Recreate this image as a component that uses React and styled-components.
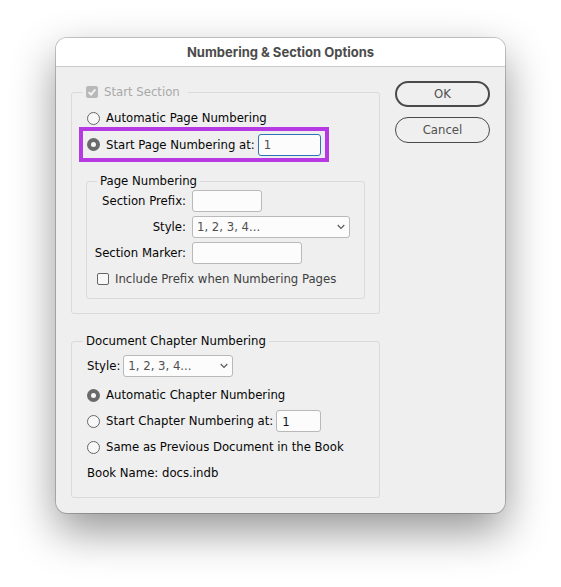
import React from "react";
import styled, { createGlobalStyle, css } from "styled-components";

const GlobalStyle = createGlobalStyle`
  *, *::before, *::after { box-sizing: border-box; }
  body {
    margin: 0;
    background: #fff;
    color: #060606;
    font: 13px/18px "DejaVu Sans Condensed", "Noto Sans", sans-serif;
  }
  button, input, select { font: inherit; margin: 0; }
`;

const Page = styled.main`
  display: flex;
  justify-content: center;
  align-items: flex-start;
  min-height: 100vh;
  padding: 38px 56px;
`;

const Dialog = styled.form`
  flex: 1;
  max-width: 640px;
  border-radius: 11px;
  background: #efefef;
  box-shadow: 0 0 0 1px rgba(0, 0, 0, 0.2), 0 18px 44px rgba(0, 0, 0, 0.42);
`;

const TitleBar = styled.header`
  display: flex;
  align-items: center;
  justify-content: center;
  height: 29px;
  border-bottom: 1px solid #cbcbcb;
  border-radius: 11px 11px 0 0;
  background: #fff;
`;

const Title = styled.h1`
  margin: 0;
  color: #4b4b4b;
  font: 700 13px/18px Inter, sans-serif;
`;

const Body = styled.div`
  display: flex;
  align-items: flex-start;
  gap: 15px;
  padding: 14px 15px 15px;
`;

const Sections = styled.div`
  display: grid;
  flex: 1;
  gap: 18px;
  min-width: 0;
`;

const Actions = styled.div`
  display: grid;
  flex: 0 0 95px;
  gap: 10px;
`;

const PillButton = styled.button`
  height: 26px;
  padding: 0;
  border: ${(p) => (p.$primary ? 2 : 1)}px solid #4a4a4a;
  border-radius: 13px;
  background: transparent;
  color: #505050;
`;

const Group = styled.fieldset`
  min-width: 0;
  margin: 0;
  padding: 2px 14px 14px 11px;
  border: 1px solid #dadada;
  border-radius: 3px;
`;

const ChapterGroup = styled(Group)`
  padding-top: 5px;
  padding-bottom: 11px;
`;

const InnerGroup = styled(Group)`
  margin: 14px 0 0 3px;
  padding: 0 10px 8px;
`;

const Legend = styled.legend`
  height: 18px;
  padding: 0 3px;
`;

const SectionLegend = styled.legend`
  display: flex;
  align-items: center;
  height: 22px;
  padding: 0 8px 0 3px;
  color: #a9a9a9;
`;

const Row = styled.div`
  display: flex;
  align-items: center;
  gap: 3px;
  width: fit-content;
  height: 26px;
  padding: 0 4px;
  ${(p) =>
    p.$highlighted &&
    css`
      height: 27px;
      outline: 4px solid #b53ae3;
    `}
`;

const StyleRow = styled(Row)`
  height: 22px;
  margin-bottom: 5px;
`;

const Choice = styled.label`
  display: flex;
  align-items: center;
  gap: 6px;
  white-space: nowrap;
  color: ${(p) => (p.$muted ? "#404040" : "inherit")};
`;

const Radio = styled.input.attrs({ type: "radio" })`
  appearance: none;
  flex: none;
  width: 13px;
  height: 13px;
  border: 1px solid #666;
  border-radius: 50%;
  background: #f8f8f8;
  &:checked {
    border: 4px solid #6a6a6a;
  }
`;

const CheckFrame = styled.span`
  display: grid;
  flex: none;
  width: 12px;
  height: 12px;
  > * {
    grid-area: 1 / 1;
  }
  svg {
    pointer-events: none;
  }
`;

const CheckInput = styled.input.attrs({ type: "checkbox" })`
  appearance: none;
  width: 12px;
  height: 12px;
  border: 1px solid #666;
  border-radius: 2px;
  background: #f8f8f8;
  &:checked {
    border-color: #b9b9b9;
    background: #b9b9b9;
  }
`;

const TextInput = styled.input.attrs({ type: "text" })`
  width: ${(p) => p.$width}px;
  height: 22px;
  padding: 0 5px;
  border: 1px solid ${(p) => (p.$active ? "#2d74b8" : "#b9b9b9")};
  border-radius: 3px;
  background: #fcfcfc;
  color: ${(p) => (p.$active ? "#505050" : "#151515")};
  outline: none;
`;

const SelectFrame = styled.span`
  display: grid;
  align-items: center;
  width: ${(p) => p.$width}px;
  > * {
    grid-area: 1 / 1;
  }
  svg {
    justify-self: end;
    margin-right: 5px;
    pointer-events: none;
  }
`;

const SelectInput = styled.select`
  appearance: none;
  width: 100%;
  height: 22px;
  padding: 0 18px 0 4px;
  border: 1px solid #b9b9b9;
  border-radius: 3px;
  background: #fcfcfc;
  color: #505050;
`;

const FieldGrid = styled.div`
  display: grid;
  grid-template-columns: 89px 1fr;
  align-items: center;
  gap: 4px 6px;
`;

const FieldLabel = styled.label`
  justify-self: end;
  white-space: nowrap;
`;

const CheckRow = styled.div`
  display: flex;
  align-items: center;
  height: 22px;
  margin-top: 4px;
`;

function Checkbox(props) {
  return (
    <CheckFrame>
      <CheckInput {...props} />
      {props.defaultChecked && (
        <svg width="12" height="12" viewBox="0 0 12 12" fill="none" aria-hidden="true">
          <path d="M2.6 6.2 5 8.6 9.4 3.4" stroke="#f4f4f4" strokeWidth="1.8" />
        </svg>
      )}
    </CheckFrame>
  );
}

function StyleSelect({ id, width }) {
  return (
    <SelectFrame $width={width}>
      <SelectInput id={id}>
        <option>1, 2, 3, 4...</option>
      </SelectInput>
      <svg width="8" height="6" viewBox="0 0 8 6" fill="none" aria-hidden="true">
        <path d="M.7 1 4 4.4 7.3 1" stroke="#555" strokeWidth="1.1" />
      </svg>
    </SelectFrame>
  );
}

export default function App() {
  return (
    <>
      <GlobalStyle />
      <Page>
        <Dialog role="dialog" aria-labelledby="dialog-title">
          <TitleBar>
            <Title id="dialog-title">Numbering &amp; Section Options</Title>
          </TitleBar>
          <Body>
            <Sections>
              <Group>
                <SectionLegend>
                  <Choice>
                    <Checkbox defaultChecked disabled />
                    Start Section
                  </Choice>
                </SectionLegend>
                <Row>
                  <Choice>
                    <Radio name="page" />
                    Automatic Page Numbering
                  </Choice>
                </Row>
                <Row $highlighted>
                  <Choice>
                    <Radio name="page" defaultChecked />
                    Start Page Numbering at:
                  </Choice>
                  <TextInput $width={63} $active defaultValue="1" aria-label="First page number" />
                </Row>
                <InnerGroup>
                  <Legend>Page Numbering</Legend>
                  <FieldGrid>
                    <FieldLabel htmlFor="prefix">Section Prefix:</FieldLabel>
                    <TextInput id="prefix" $width={70} />
                    <FieldLabel htmlFor="page-style">Style:</FieldLabel>
                    <StyleSelect id="page-style" width={158} />
                    <FieldLabel htmlFor="marker">Section Marker:</FieldLabel>
                    <TextInput id="marker" $width={110} />
                  </FieldGrid>
                  <CheckRow>
                    <Choice $muted>
                      <Checkbox />
                      Include Prefix when Numbering Pages
                    </Choice>
                  </CheckRow>
                </InnerGroup>
              </Group>
              <ChapterGroup>
                <Legend>Document Chapter Numbering</Legend>
                <StyleRow>
                  <label htmlFor="chapter-style">Style:</label>
                  <StyleSelect id="chapter-style" width={110} />
                </StyleRow>
                <Row>
                  <Choice>
                    <Radio name="chapter" defaultChecked />
                    Automatic Chapter Numbering
                  </Choice>
                </Row>
                <Row>
                  <Choice>
                    <Radio name="chapter" />
                    Start Chapter Numbering at:
                  </Choice>
                  <TextInput $width={45} defaultValue="1" aria-label="First chapter number" />
                </Row>
                <Row>
                  <Choice>
                    <Radio name="chapter" />
                    Same as Previous Document in the Book
                  </Choice>
                </Row>
                <Row>Book Name: docs.indb</Row>
              </ChapterGroup>
            </Sections>
            <Actions>
              <PillButton type="button" $primary>
                OK
              </PillButton>
              <PillButton type="button">Cancel</PillButton>
            </Actions>
          </Body>
        </Dialog>
      </Page>
    </>
  );
}
